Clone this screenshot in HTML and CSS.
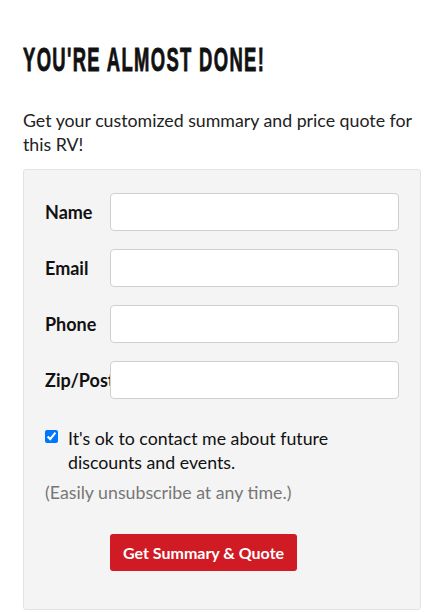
FILE: index.html
```html
<!DOCTYPE html>
<html lang="en">
<head>
    <meta charset="UTF-8">
    <meta name="viewport" content="width=device-width, initial-scale=1.0">
    <title>Get Your Quote</title>
    <link rel="stylesheet" href="styles.css">
</head>
<body>
    <div class="page">
        <h1><span>You're almost done!</span></h1>
        <p class="intro">Get your customized summary and price quote for this RV!</p>

        <form class="quote-box" onsubmit="return false">
            <div class="field">
                <label for="name">Name</label>
                <input type="text" id="name">
            </div>
            <div class="field">
                <label for="email">Email</label>
                <input type="text" id="email">
            </div>
            <div class="field">
                <label for="phone">Phone</label>
                <input type="text" id="phone">
            </div>
            <div class="field">
                <label for="zip">Zip/Postal</label>
                <input type="text" id="zip">
            </div>

            <label class="optin">
                <input type="checkbox" checked>
                <span>It's ok to contact me about future discounts and events.</span>
            </label>
            <p class="note">(Easily unsubscribe at any time.)</p>

            <div class="actions">
                <button type="submit">Get Summary &amp; Quote</button>
            </div>
        </form>
    </div>
</body>
</html>
```

FILE: styles.css
```css
body {
    margin: 0;
    font-family: 'Lato', sans-serif;
    color: #222;
    background: #fff;
}

.page {
    padding: 0 20px 0 23px;
}

h1 {
    margin: 43px 0 0;
    height: 34px;
    font-family: 'Liberation Sans', sans-serif;
    font-size: 30px;
    line-height: 1;
    font-weight: 700;
    letter-spacing: 2.2px;
    text-transform: uppercase;
    white-space: nowrap;
    color: #111;
}

/* no condensed face offline, so squeeze the bold sans */
h1 span {
    display: inline-block;
    vertical-align: top;
    transform: scale(0.614, 1.133);
    transform-origin: left top;
    -webkit-text-stroke: 0.8px #111;
}

.intro {
    margin: 31px 0 13px;
    font-size: 17.75px;
    line-height: 24px;
}

.quote-box {
    background-color: #f4f4f4;
    border: 1px solid #e3e3e3;
    border-radius: 3px;
    padding: 23px 21px 38px 21px;
}

.field {
    display: flex;
    align-items: center;
    margin-bottom: 18px;
}

.field label {
    flex: 0 0 65px;
    min-width: 0;
    white-space: nowrap;
    font-size: 18px;
    font-weight: 700;
    color: #111;
}

.field input {
    flex: 1;
    min-width: 0;
    height: 38px;
    box-sizing: border-box;
    border: 1px solid #cfcfcf;
    border-radius: 4px;
    background: #fff;
    padding: 0 10px;
    font-family: inherit;
    font-size: 16px;
}

.optin {
    display: flex;
    align-items: flex-start;
    margin-top: 27px;
    font-size: 17.75px;
    line-height: 24px;
    color: #111;
}

.optin input {
    margin: 4px 10px 0 0;
    width: 13px;
    height: 13px;
    flex: none;
}

.note {
    margin: 6px 0 0;
    font-size: 17.75px;
    line-height: 24px;
    color: #777;
}

.actions {
    margin-top: 30px;
    padding-left: 65px;
}

button {
    height: 37px;
    padding: 0 13px;
    background-color: #d01b24;
    color: #fff;
    border: none;
    border-radius: 3px;
    font-family: inherit;
    font-size: 16px;
    font-weight: 700;
    cursor: pointer;
}
```
